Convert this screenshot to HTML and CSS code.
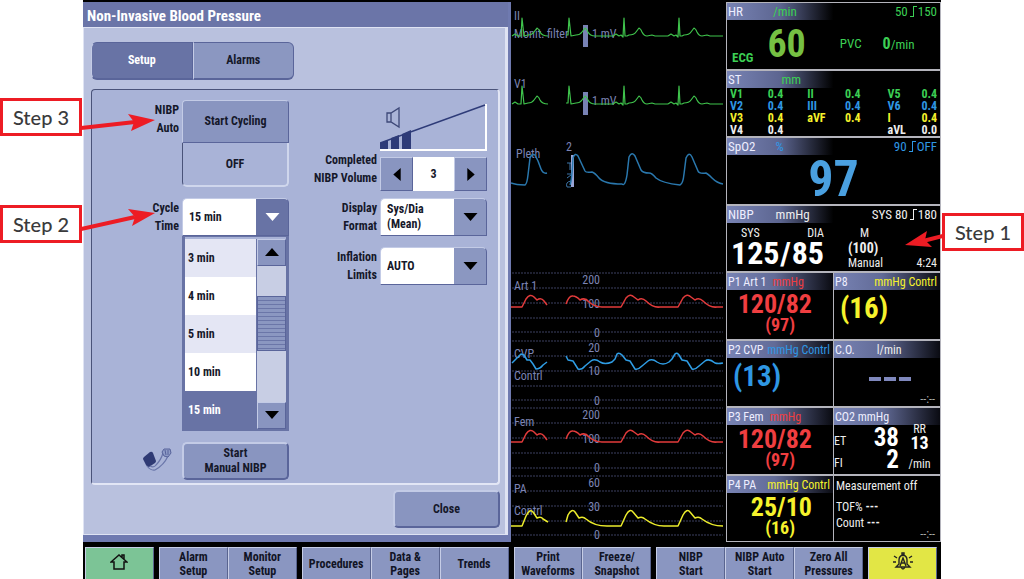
FILE: index.html
```html
<!DOCTYPE html>
<html lang="en">
<head>
<meta charset="utf-8">
<title>Non-Invasive Blood Pressure</title>
<link rel="stylesheet" href="styles.css">
</head>
<body>
<div class="stage">
<main class="monitor">
  <div class="screen">
    <section class="dialog">
      <h1 class="dialog-title">Non-Invasive Blood Pressure</h1>
      <div class="dialog-body">
        <div class="tabs" role="tablist">
          <button class="tab active" role="tab" aria-selected="true">Setup</button>
          <button class="tab" role="tab" aria-selected="false">Alarms</button>
        </div>
        <div class="panel">
          <div class="form cycle-form">
            <span class="label">NIBP<br>Auto</span>
            <div class="auto">
              <button class="btn auto-btn">Start Cycling</button>
              <output class="auto-state">OFF</output>
            </div>
            <label class="label" for="cycle">Cycle<br>Time</label>
            <div class="cycle">
              <div class="drop open">
                <select id="cycle"><option>15 min</option></select>
                <svg class="caret" viewBox="0 0 14 8"><path d="M0 0H14L7 8Z"/></svg>
              </div>
              <div class="listbox">
                <select class="list" size="5" aria-label="Cycle time options">
                  <option>3 min</option><option>4 min</option><option>5 min</option><option>10 min</option><option selected>15 min</option>
                </select>
                <div class="scroll">
                  <button class="btn scroll-btn" aria-label="Scroll up"><svg viewBox="0 0 14 8"><path d="M0 8H14L7 0Z"/></svg></button>
                  <div class="track"><div class="thumb"></div></div>
                  <button class="btn scroll-btn" aria-label="Scroll down"><svg viewBox="0 0 14 8"><path d="M0 0H14L7 8Z"/></svg></button>
                </div>
              </div>
            </div>
            <span class="cuff"><svg viewBox="0 0 30 24" width="30" height="24"><path d="M2 9L8 4Q10 3 11 5L14 13Q14 14 13 15L7 19Q5 19 4 17L1 11Q1 10 2 9Z" fill="#2f3a74"/><path d="M5 18Q9 23 13 22Q22 17 26 8M8 18Q12 20 14 17Q19 12 21 5" fill="none" stroke="#6a76aa" stroke-width="1.2"/><path d="M20 4L22 1H28L29 5L26 9L22 8ZM23 2L24 7M26 2V7" fill="#8f9bc7" stroke="#56629a"/></svg></span>
            <button class="btn manual">Start<br>Manual NIBP</button>
          </div>
          <div class="form volume-form">
            <svg class="wedge" viewBox="0 0 107 47" width="107" height="47"><path d="M0 46H106V0" fill="none" stroke="#fff" stroke-width="2"/><path d="M0 39L8 36V45H0ZM11 34L19 31V45H11ZM22 30L31 26V45H22Z" fill="#2e3b78"/><path d="M0 39L105 1" stroke="#2e3b78" stroke-width="1.5"/><path d="M7 9H11L19 4V23L11 18H7ZM11 9V18" fill="none" stroke="#3d4878" stroke-width="1.3"/></svg>
            <label class="label" for="volume">Completed<br>NIBP Volume</label>
            <div class="spinner">
              <button class="btn" aria-label="Lower"><svg viewBox="0 0 8 14"><path d="M8 0V14L0 7Z"/></svg></button>
              <input id="volume" value="3">
              <button class="btn" aria-label="Higher"><svg viewBox="0 0 8 14"><path d="M0 0V14L8 7Z"/></svg></button>
            </div>
            <label class="label" for="format">Display<br>Format</label>
            <div class="drop">
              <select id="format" class="two-line"><option>Sys/Dia (Mean)</option></select>
              <svg class="caret" viewBox="0 0 14 8"><path d="M0 0H14L7 8Z"/></svg>
            </div>
            <label class="label" for="limits">Inflation<br>Limits</label>
            <div class="drop">
              <select id="limits"><option>AUTO</option></select>
              <svg class="caret" viewBox="0 0 14 8"><path d="M0 0H14L7 8Z"/></svg>
            </div>
          </div>
        </div>
        <button class="btn close">Close</button>
      </div>
    </section>

    <section class="waves" aria-label="Waveforms">
      <svg viewBox="511 0 215 542">
        <defs>
          <path id="beat" d="M-11 0L-8 -2L-5 0L-3 -1L-1 1L0 -18L1 0L3 0L5 -1Q10 -1 12 -4L15 -8Q17 -7 18 -4Q20 0 23 0L28 -1L31 0H44"/>
          <g id="ecg">
            <path d="M512 0L515 -2L518 0L521 0L522 -18L524 0L528 -1Q532 -1 534 -4L537 -8Q539 -7 540 -4Q542 0 548 0M566 -1H568L569 -18L571 0L576 -1Q580 -1 582 -4L585 -8Q587 -7 588 -4Q590 0 595 0H613"/>
            <use href="#beat" x="624"/><use href="#beat" x="679"/>
          </g>
          <g id="art">
            <path d="M511 307H522L526 299Q530 293 534 297L537 300Q541 297 544 301L547 305M566 304Q569 295 573 296Q576 296 580 300Q585 297 589 302Q595 307 602 307H621L626 298Q630 293 634 297L638 300Q642 297 646 301Q653 308 660 307H678L683 298Q687 293 691 297L695 300Q699 297 703 301Q710 308 717 307H723"/>
          </g>
        </defs>
        <path class="grid" d="M512 273H723M512 288H723M512 303H723M512 318H723M512 332H723M512 341H723M512 356H723M512 371H723M512 386H723M512 400H723M512 408H723M512 423H723M512 438H723M512 453H723M512 468H723M512 476H723M512 491H723M512 506H723M512 521H723M512 535H723"/>
        <g class="wave-text">
          <text x="514" y="20">II</text><text x="514" y="38">Monit. filter</text><text x="592" y="38">1 mV</text>
          <text x="514" y="88">V1</text><text x="592" y="105">1 mV</text>
          <text x="516" y="158">Pleth</text><text x="566" y="151">2</text>
          <text x="514" y="290">Art 1</text><text x="514" y="358">CVP</text><text x="514" y="380">Contrl</text>
          <text x="514" y="426">Fem</text><text x="514" y="493">PA</text><text x="514" y="515">Contrl</text>
          <g text-anchor="end">
            <text x="600" y="284">200</text><text x="600" y="308">100</text><text x="600" y="337">0</text>
            <text x="600" y="352">20</text><text x="600" y="375">10</text><text x="600" y="405">0</text>
            <text x="600" y="419">200</text><text x="600" y="443">100</text><text x="600" y="472">0</text>
            <text x="600" y="487">60</text><text x="600" y="511">30</text><text x="600" y="539">0</text>
          </g>
        </g>
        <path d="M583 25H588V47H583ZM583 92H588V115H583Z" fill="#7882b4"/>
        <path d="M571 155H574V187H571Z" fill="#9aa5d6"/>
        <path d="M567 163H571M570 163V170M567 174H571M567 178L571 175M567 187Q565 182 571 181M567 187H571" fill="none" stroke="#3c74a8"/>
        <use href="#ecg" y="36" class="w green"/><use href="#ecg" y="104" class="w green"/>
        <path class="w pleth" d="M511 183Q516 185 525 185Q527 184 528 175L530 158Q532 153 535 155L538 161L541 169Q543 174 547 173M570 185Q572 180 573 158Q575 152 578 156L585 171Q586 173 592 172Q595 173 599 178Q604 184 622 184Q625 187 627 175L629 157Q632 151 635 156L641 170Q643 173 649 173Q652 173 656 178Q662 183 680 185Q683 184 684 174L686 158Q689 151 692 157L698 171Q699 174 706 173Q708 174 712 178Q717 183 723 184"/>
        <use href="#art" class="w red"/><use href="#art" y="135" class="w red"/>
        <path class="w blue" d="M512 363L515 360L521 354L524 355L527 360H530L533 364L536 369Q540 369 543 365L547 362M566 356L568 360L573 361L578 369Q582 370 585 366L591 361Q595 358 600 362Q605 365 612 362L615 359L617 354Q619 352 622 355L626 360L630 361L635 369Q638 370 642 366L648 361Q652 358 657 362Q663 366 669 362L672 359L675 354Q677 352 679 355L682 360L687 361L692 369Q695 370 699 366L705 361Q709 358 715 363Q718 364 723 363"/>
        <path class="w yellow" d="M511 526H522L526 516Q530 508 533 512L537 518Q541 516 543 519L548 522M566 522L568 515Q572 508 575 512L579 518Q583 516 586 519Q594 526 607 526H621L626 515Q630 508 633 512L638 518Q642 516 645 519Q654 526 664 526H678L683 515Q687 508 690 512L695 518Q699 516 702 519Q711 526 723 526"/>
      </svg>
    </section>

    <section class="vitals" aria-label="Vital signs">
      <article class="tile wide green-t">
        <header><b>HR</b><span class="u1">/min</span><span class="limit">50<i class="lim"></i>150</span></header>
        <div class="hr"><span class="ecg-l">ECG</span><strong class="n60">60</strong><span class="pvc">PVC</span><span><strong class="zero">0</strong>/min</span></div>
      </article>
      <article class="tile wide">
        <header><b>ST</b><span class="u2 green-t">mm</span></header>
        <table class="st">
          <tr class="green-t"><th>V1</th><td>0.4</td><th>II</th><td>0.4</td><th>V5</th><td>0.4</td></tr>
          <tr class="blue-t"><th>V2</th><td>0.4</td><th>III</th><td>0.4</td><th>V6</th><td>0.4</td></tr>
          <tr class="yellow-t"><th>V3</th><td>0.4</td><th>aVF</th><td>0.4</td><th>I</th><td>0.4</td></tr>
          <tr><th>V4</th><td>0.4</td><th></th><td></td><th>aVL</th><td>0.0</td></tr>
        </table>
      </article>
      <article class="tile wide blue-t">
        <header><b>SpO2</b><span class="u3">%</span><span class="limit">90<i class="lim"></i>OFF</span></header>
        <strong class="n97">97</strong>
      </article>
      <article class="tile wide">
        <header><b>NIBP</b><span class="u4">mmHg</span><span class="limit">SYS 80<i class="lim"></i>180</span></header>
        <div class="nibp">
          <div class="sysdia"><span class="sd"><span>SYS</span><span>DIA</span></span><strong class="n125"><span>125</span><span>/</span><span>85</span></strong></div>
          <div class="mean"><span class="m">M</span><strong>(100)</strong><span class="mt"><span>Manual</span><span>4:24</span></span></div>
        </div>
      </article>
      <article class="tile red-t"><header><b>P1 Art 1</b><span class="pu">mmHg</span></header><div class="p"><strong>120/82</strong><em>(97)</em></div></article>
      <article class="tile yellow-t"><header><b>P8</b><span class="pe">mmHg Contrl</span></header><strong class="single">(16)</strong></article>
      <article class="tile blue-t"><header><b>P2 CVP</b><span class="pe">mmHg Contrl</span></header><strong class="single">(13)</strong></article>
      <article class="tile"><header><b>C.O.</b><span class="co-u">l/min</span></header><div class="co" aria-label="No value"><i></i><i></i><i></i></div><span class="time">--:--</span></article>
      <article class="tile red-t"><header><b>P3 Fem</b><span class="pu">mmHg</span></header><div class="p"><strong>120/82</strong><em>(97)</em></div></article>
      <article class="tile"><header><b>CO2 mmHg</b></header>
        <div class="co2"><span>ET</span><strong>38</strong><span class="rr">RR<b>13</b></span><span>FI</span><strong>2</strong><span class="rr">/min</span></div>
      </article>
      <article class="tile yellow-t"><header><b>P4 PA</b><span class="pe">mmHg Contrl</span></header><div class="p"><strong>25/10</strong><em>(16)</em></div></article>
      <article class="tile"><div class="tof"><span>Measurement off</span><span class="tl">TOF% <b>---</b></span><span>Count <b>---</b></span></div><span class="time">--:--</span></article>
    </section>
  </div>

  <nav class="toolbar">
    <div class="group g1"><button class="key home" aria-label="Home"><svg viewBox="0 0 18 18" width="18" height="18"><path d="M1 9L9 2L17 9H14V16H4V9ZM12 4V2H14V6" fill="none" stroke="#111" stroke-width="1.5"/></svg></button></div>
    <div class="group g2"><button class="key">Alarm<br>Setup</button><button class="key">Monitor<br>Setup</button></div>
    <div class="group g3"><button class="key">Procedures</button><button class="key">Data &amp;<br>Pages</button><button class="key">Trends</button></div>
    <div class="group g2"><button class="key">Print<br>Waveforms</button><button class="key">Freeze/<br>Snapshot</button></div>
    <div class="group g3"><button class="key">NIBP<br>Start</button><button class="key">NIBP Auto<br>Start</button><button class="key">Zero All<br>Pressures</button></div>
    <div class="group g1"><button class="key bell" aria-label="Alarm silence"><svg viewBox="0 0 20 20" width="20" height="20"><path d="M3 15H17L14 12V8Q14 4 10 3Q6 4 6 8V12ZM9 3V1H11V3M8 15Q10 19 12 15M7 14L10 6L13 14M8 11H12M4 6L1 4M3 10H0M16 6L19 4M17 10H20" fill="none" stroke="#222" stroke-width="1.4"/></svg></button></div>
  </nav>
</main>

<aside class="callout step3">Step 3</aside>
<aside class="callout step2">Step 2</aside>
<aside class="callout step1">Step 1</aside>
<svg class="arrow arrow3" viewBox="0 0 74 20" width="74" height="20"><path d="M0 15L54 9" stroke="#ed1c24" stroke-width="4"/><path d="M74 7L47 1L53 9L50 18Z" fill="#ed1c24"/></svg>
<svg class="arrow arrow2" viewBox="0 0 74 24" width="74" height="24"><path d="M0 21L54 9" stroke="#ed1c24" stroke-width="4"/><path d="M74 5L47 1L54 9L51 18Z" fill="#ed1c24"/></svg>
<svg class="arrow arrow1" viewBox="0 0 38 20" width="38" height="20"><path d="M38 6L18 11" stroke="#ed1c24" stroke-width="4"/><path d="M0 15L22 1L20 10L27 17Z" fill="#ed1c24"/></svg>
</div>
</body>
</html>
```
FILE: styles.css
```css
* { box-sizing: border-box; }
body {
  margin: 0;
  background: #fff;
  font-family: "Liberation Sans Narrow", "Arial Narrow", "Roboto Condensed", "Liberation Sans", sans-serif;
  font-size: 12px;
  line-height: 15px;
}
button, select, input { font: inherit; color: inherit; margin: 0; padding: 0; border-radius: 0; }
i, em { font-style: normal; }
.stage { position: relative; padding: 0 83px; }
.monitor { display: flex; flex-direction: column; min-height: 100vh; background: #000; }
.screen { flex: 1; display: grid; grid-template-columns: 428fr 215fr 215fr; padding-bottom: 4px; }

/* dialog */
.dialog {
  display: flex; flex-direction: column;
  margin-top: 2px;
  background: #6f7ab0;
  border-right: 3px solid #6f7ab0;
  border-bottom: 7px solid #6f7ab0;
  font-weight: bold;
  color: #15182a;
}
.dialog-title {
  margin: 0; padding: 0 4px;
  height: 25px; line-height: 28px; font-size: 15px;
  color: #fff; background: #6b75a8;
}
.dialog-body {
  flex: 1; display: flex; flex-direction: column;
  padding: 14px 5px 5px 7px;
  background: #b9c1de;
  border: 1px solid #dfe3f3; border-right-width: 3px;
}
.tabs { display: flex; width: 203px; height: 38px; }
.tab {
  flex: 1; background: #8b97c1;
  border: 1px solid #5a659a; border-left-color: #c5cce6; border-bottom-width: 2px;
  border-radius: 0 6px 6px 0;
}
.tab.active { background: #6873a5; color: #fff; border-radius: 6px 0 0 6px; }
.panel {
  display: flex; justify-content: space-between;
  margin: 9px 0 5px; padding: 10px 11px 3px 0;
  min-height: 394px;
  background: #a9b3d7;
  border: 2px solid #e2e6f5; border-top: 1px solid #4a5379; border-left: 1px solid #4a5379;
  border-radius: 4px;
}
.btn {
  background: #8995c0;
  border: 1px solid #5a659a; border-top-color: #c3cbe6; border-left-color: #c3cbe6;
}
.form { display: grid; align-content: start; }
.label { text-align: right; line-height: 18px; padding-top: 1px; }
.cycle-form { grid-template-columns: 87px 107px; column-gap: 3px; row-gap: 11px; }
.auto { display: flex; flex-direction: column; height: 87px; }
.auto-btn { height: 43px; border-radius: 4px 4px 0 0; }
.auto-state {
  flex: 1; display: grid; place-items: center;
  border: 2px solid #cfd6ec; border-left: 1px solid #4a5379; border-top: 0; border-radius: 0 0 5px 5px;
}
.drop { position: relative; display: flex; height: 38px; }
.drop select {
  appearance: none; flex: 1; min-width: 0;
  padding-left: 6px;
  border: 1px solid #c3cbe6; border-right-color: #5a659a; border-bottom-color: #5a659a;
  border-radius: 5px 5px 0 0;
  background: linear-gradient(90deg, #fff 73px, #8b97c1 73px);
  font-weight: bold;
}
.drop.open select { background: linear-gradient(90deg, #fff 73px, #6873a5 73px); }
.drop .two-line { white-space: normal !important; padding-right: 50px; }
.caret { position: absolute; right: 9px; top: 15px; width: 15px; height: 8px; pointer-events: none; }
.open .caret { fill: #fff; }
.listbox {
  display: flex; height: 195px; padding: 2px 0 0;
  border: 3px solid #6873a5; border-top-width: 1px; border-bottom-width: 2px;
}
.list {
  appearance: none; flex: 1; min-width: 0; height: 190px;
  border: 0; outline: 0; overflow: hidden; background: #fff; font-weight: bold;
}
.list option { height: 38px; padding: 12px 3px 0; font-weight: bold; }
.list option:nth-child(odd) { background: #e4e6f4; }
.list option:checked { background: linear-gradient(#6873a5, #6873a5); -webkit-text-fill-color: #fff; }
.scroll { display: flex; flex-direction: column; width: 30px; border-left: 1px solid #6873a5; }
.scroll-btn { height: 27px; }
.scroll-btn svg { width: 14px; height: 8px; }
.track { flex: 1; padding-top: 30px; background: #c8cee4; }
.thumb { height: 55px; border: 1px solid #5a659a; background: repeating-linear-gradient(#8b97c1 0 3px, #6b76a8 3px 4px); }
.cuff { text-align: right; padding: 6px 7px 0 0; }
.manual, .close { height: 38px; border-width: 2px; border-radius: 5px; }
.volume-form { grid-template-columns: auto 107px; column-gap: 3px; row-gap: 11px; padding-top: 4px; }
.wedge { grid-column: 2; margin-bottom: -5px; }
.volume-form .label { margin-top: -6px; padding-top: 0; }
.volume-form .drop + .label, .spinner + .label { margin-top: 1px; }
.spinner { display: flex; height: 34px; margin-bottom: -5px; }
.spinner .btn { width: 33px; display: grid; place-items: center; }
.spinner svg { width: 8px; height: 13px; }
.spinner input { flex: 1; min-width: 0; border: 0; text-align: center; background: #fff; font-weight: bold; }
.close { align-self: flex-end; width: 107px; }

/* waveforms */
.waves svg { display: block; width: 100%; }
.wave-text { fill: #7c84b4; font-size: 12px; }
.grid { fill: none; stroke: #3c4060; stroke-dasharray: 2 1; }
.w { fill: none; stroke-width: 1.5; stroke-linejoin: round; }
.green { stroke: #3fc34c; stroke-width: 1.2; }
.pleth { stroke: #2a78ae; }
.red { stroke: #e23b3b; }
.blue { stroke: #2f9de4; }
.yellow { stroke: #ecec2c; }

/* vitals */
.vitals {
  display: grid; grid-template: repeat(8, minmax(0, 1fr)) / repeat(2, minmax(0, 1fr)); gap: 2px 1px;
  margin-top: 2px; padding: 1px; background: #b4b4bc; color: #eee;
}
.tile { position: relative; display: flex; flex-direction: column; background: #000; overflow: hidden; }
.wide { grid-column: 1 / 3; }
.tile header {
  display: flex; height: 17px; line-height: 18px; padding: 0 3px 0 1px; font-size: 12px; white-space: nowrap;
  background: linear-gradient(90deg, #7883b4, #626b97 45%, #0a0b12);
}
.tile.wide header { font-size: 13px; background: linear-gradient(90deg, #7883b4, #5c6590 25%, #000 50%); }
header b { font-weight: normal; color: #eef; }
.green-t { color: #3ccf54; } .blue-t { color: #2f97e4; } .red-t { color: #f03e40; } .yellow-t { color: #f6f22c; }
.u1 { margin-left: 30px; } .u2 { margin-left: 40px; } .u3 { margin-left: 20px; } .u4 { margin-left: 22px; }
.limit, .pe { margin-left: auto; }
.pu { margin-left: 6px; }
.lim { display: inline-block; width: 6px; height: 10px; position: relative; margin: 0 2px; }
.lim::before, .lim::after { content: ""; position: absolute; height: 10px; top: 0; width: 3px; border: solid currentColor; }
.lim::before { left: 0; border-width: 0 0 1px; }
.lim::after { left: 3px; border-width: 1px 0 0 1px; }
.hr { display: flex; align-items: center; height: 47px; font-size: 13px; padding-left: 5px; }
.ecg-l { font-weight: bold; align-self: flex-end; line-height: 18px; }
.n60 { font-size: 38px; line-height: 44px; color: #76c043; margin-left: 14px; }
.pvc { margin-left: 34px; } .pvc + span { margin-left: 21px; }
.zero { font-size: 16px; }
.st { width: 100%; border-collapse: collapse; table-layout: fixed; font-size: 12px; line-height: 12px; font-weight: bold; }
.st th, .st td { padding: 0 3px; height: 12px; width: 14%; }
.st th { text-align: left; } .st td { text-align: right; }
.st td:nth-child(2), .st td:nth-child(4) { width: 23%; padding-right: 21px; }
.st th:nth-child(5) { padding-left: 6px; }
.n97 { font-size: 50px; line-height: 48px; text-align: center; color: #4aa0e0; }
.nibp { display: flex; gap: 24px; padding: 3px 3px 0 4px; }
.sysdia { width: 93px; }
.sd { display: flex; justify-content: space-between; padding: 0 0 0 10px; line-height: 14px; }
.n125 { display: flex; justify-content: space-between; font-size: 32px; line-height: 27px; color: #fff; }
.mean { flex: 1; display: flex; flex-direction: column; line-height: 15px; }
.mean strong { font-size: 14px; } .m { padding-left: 12px; }
.mt { display: flex; justify-content: space-between; }
.p { display: flex; flex-direction: column; text-align: right; padding: 3px 21px 0 0; }
.p strong { font-size: 26px; line-height: 23px; }
.p em { font-size: 18px; line-height: 18px; font-weight: bold; padding-right: 17px; }
.single { font-size: 29px; line-height: 36px; padding-left: 6px; }
.co-u { margin-left: 22px; }
.co { display: flex; gap: 3px; padding: 19px 0 0 35px; }
.co i { width: 12px; height: 4px; background: #7f88bd; }
.time { position: absolute; right: 5px; bottom: 1px; line-height: 12px; color: #aaa; }
.co2 { display: grid; grid-template-columns: 20px 45px 1fr; grid-template-rows: 24px 22px; align-items: end; }
.co2 strong { text-align: right; font-size: 25px; line-height: 23px; color: #fff; }
.co2 .rr { text-align: center; line-height: 13px; }
.rr b { display: block; font-size: 18px; color: #fff; }
.tof { display: flex; flex-direction: column; padding: 2px; line-height: 16px; }
.tl { margin-top: 5px; }

/* toolbar */
.toolbar { display: flex; gap: 5px; height: 33px; padding: 1px 4px 0 2px; }
.group { display: flex; flex: 1; }
.g2 { flex: 2; } .g3 { flex: 3; }
.key {
  flex: 1; min-width: 0; height: 32px;
  background: #8a96c1; color: #111425; font-weight: bold; line-height: 14px;
  border: 1px solid #c6cde6; border-right-color: #59648f; border-bottom: 0;
}
.home { background: #7cc496; }
.bell { background: #e2e645; }

/* step callouts */
.callout {
  position: absolute; display: grid; place-items: center;
  width: 82px; height: 38px;
  border: 3px solid #ed1c24; background: #fff; color: #3a3a3c;
  font: 500 20px/20px Lato, sans-serif;
}
.step3 { left: 0; top: 98px; } .step2 { left: 0; top: 205px; }
.step1 { right: 0; top: 213px; }
.arrow { position: absolute; }
.arrow3 { left: 81px; top: 113px; } .arrow2 { left: 81px; top: 208px; }
.arrow1 { right: 81px; top: 230px; }
```
